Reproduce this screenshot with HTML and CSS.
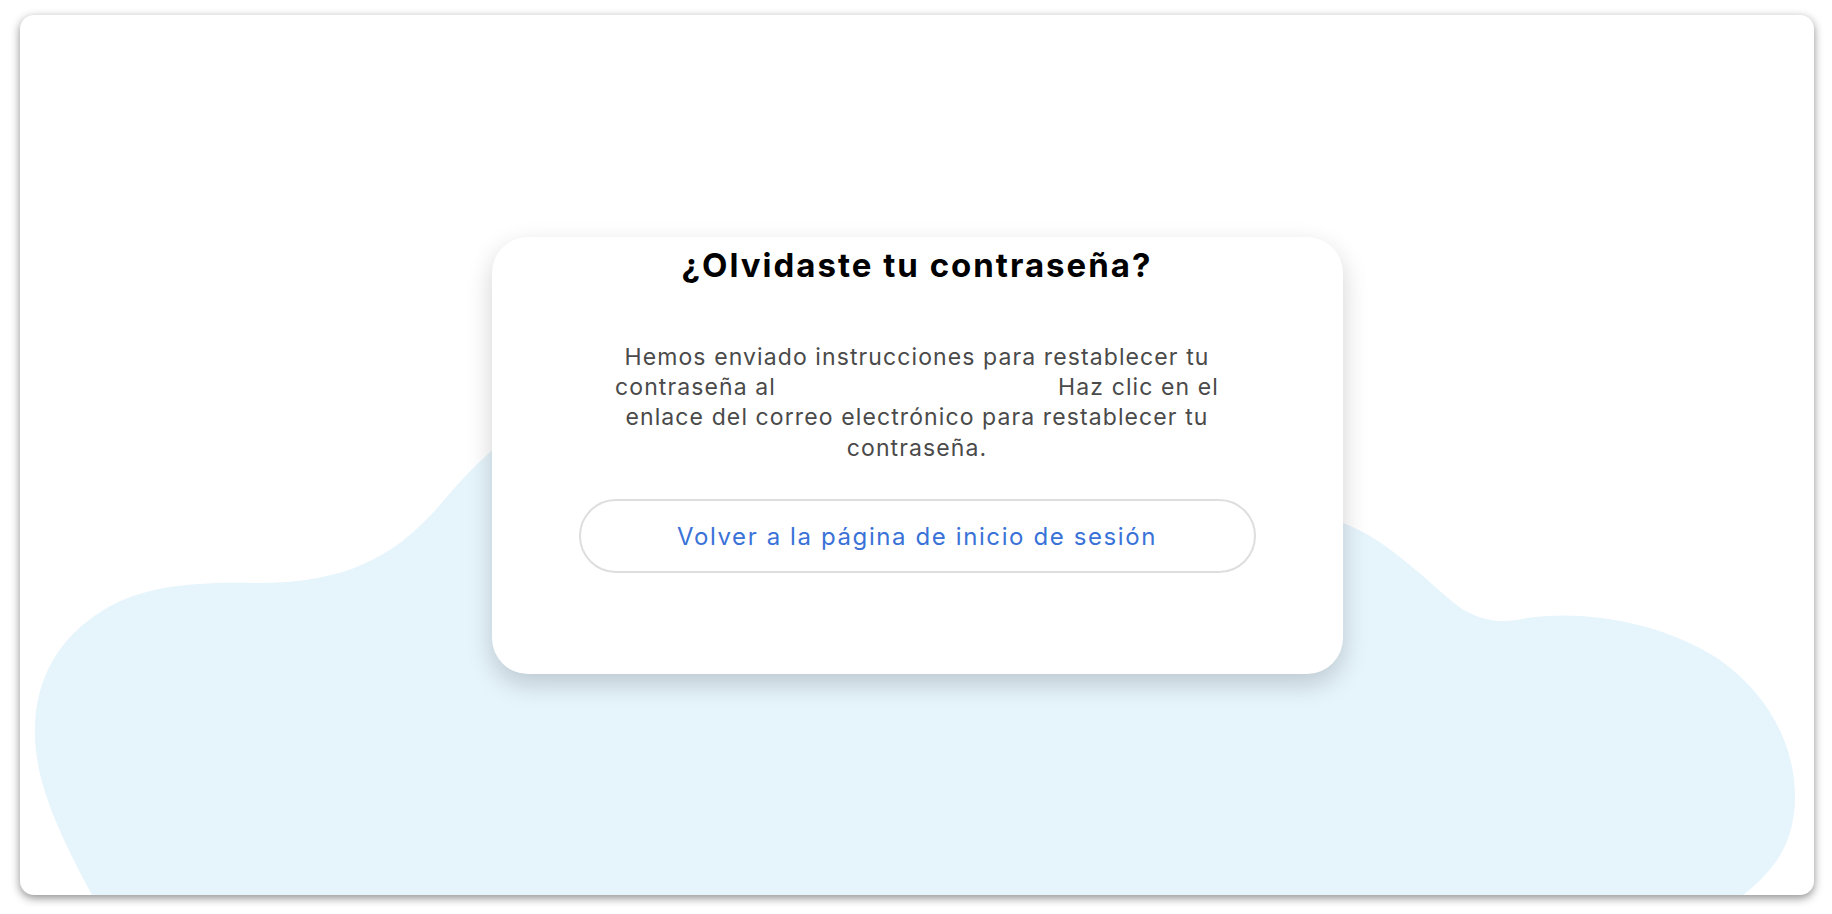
FILE: index.html
```html
<!DOCTYPE html>
<html lang="es">
<head>
    <meta charset="UTF-8">
    <meta name="viewport" content="width=device-width, initial-scale=1.0">
    <title>¿Olvidaste tu contraseña?</title>
    <link rel="stylesheet" href="styles.css">
</head>
<body>
    <div class="window">
        <!-- background blob -->
        <svg class="blob" viewBox="0 0 1794 880" preserveAspectRatio="none" aria-hidden="true">
            <path d="M 72 880 C 40 820, 13 765, 15 712 C 16 662, 40 622, 82 596 C 122 571, 172 567, 232 568 C 330 569, 380 540, 430 478 C 455 450, 480 425, 520 400 L 1300 470 L 1323 508 C 1370 525, 1412 572, 1442 594 C 1466 608, 1485 608, 1507 603 C 1560 595, 1640 605, 1700 645 C 1752 682, 1776 735, 1775 785 C 1774 822, 1760 852, 1723 880 Z" />
        </svg>

        <div class="card">
            <h1>¿Olvidaste tu contraseña?</h1>
            <p class="message">
                Hemos enviado instrucciones para restablecer tu<br>
                contraseña al <span class="email"></span> Haz clic en el<br>
                enlace del correo electrónico para restablecer tu<br>
                contraseña.
            </p>
            <a class="back-btn" href="#">Volver a la página de inicio de sesión</a>
        </div>
    </div>
</body>
</html>
```

FILE: styles.css
```css
body {
    margin: 0;
    padding: 15px 18px 19px 20px;
    background: #fff;
    font-family: Inter, "Noto Sans", sans-serif;
}

.window {
    position: relative;
    height: 880px;
    display: flex;
    align-items: center;
    justify-content: center;
    background: #fff;
    border-radius: 14px;
    overflow: hidden;
    box-shadow: 0 3px 10px rgba(0, 0, 0, 0.45);
}

.blob {
    position: absolute;
    top: 0;
    left: 0;
    width: 100%;
    height: 100%;
}

.blob path {
    fill: #e6f4fc;
}

.card {
    position: relative;
    width: 851px;
    height: 437px;
    box-sizing: border-box;
    padding-top: 8px;
    display: flex;
    flex-direction: column;
    align-items: center;
    background: #fff;
    border-radius: 36px;
    box-shadow: 0 10px 26px rgba(0, 0, 0, 0.18);
}

h1 {
    margin: 0;
    font-size: 33px;
    line-height: 40px;
    font-weight: 700;
    letter-spacing: 2px;
    color: #000;
}

.message {
    margin: 57px 0 0;
    font-size: 23px;
    line-height: 30.4px;
    letter-spacing: 1.1px;
    color: #4a4a4a;
    text-align: center;
}

.email {
    display: inline-block;
    width: 267px;
}

.back-btn {
    margin-top: 36px;
    width: 677px;
    height: 74px;
    box-sizing: border-box;
    display: flex;
    align-items: center;
    justify-content: center;
    border: 2px solid #dedede;
    border-radius: 37px;
    font-size: 24px;
    letter-spacing: 1.6px;
    color: #3a72d8;
    text-decoration: none;
}
```
